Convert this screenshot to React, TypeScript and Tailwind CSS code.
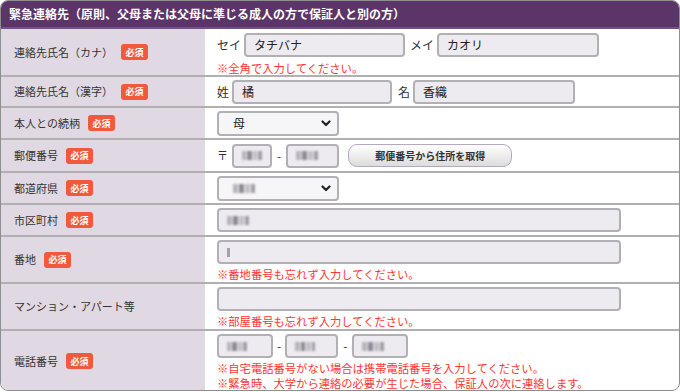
import React from "react";

const font = { fontFamily: '"Noto Sans CJK JP", "Noto Sans", sans-serif' };

function Badge() {
  return (
    <span className="ml-[8px] inline-flex h-[16px] w-[27px] items-center justify-center rounded-[3px] bg-[#f2583b] text-[9px] font-bold leading-none text-white">
      必須
    </span>
  );
}

function Label({ text, req = true }: { text: string; req?: boolean }) {
  return (
    <div className="flex w-[204px] shrink-0 items-center bg-[#e0d9e3] pl-[13px] text-[11px] text-[#333]">
      <span>{text}</span>
      {req && <Badge />}
    </div>
  );
}

function Blur({ w = 20 }: { w?: number }) {
  return (
    <span className="inline-flex items-center gap-[1px] blur-[0.8px]" style={{ width: w }}>
      <span className="h-[9px] w-[5px] bg-[#b9b4bc]" />
      <span className="h-[9px] w-[5px] bg-[#8f8a93]" />
      <span className="h-[9px] w-[5px] bg-[#c4bfc6]" />
      <span className="h-[9px] w-[4px] bg-[#a29da5]" />
    </span>
  );
}

function Input({ w, children }: { w: number | string; children?: React.ReactNode }) {
  return (
    <div
      className="flex h-[24px] items-center rounded-[4px] border-2 border-[#b3b0b5] bg-[#eeebf0] px-[8px] text-[12px] text-[#222]"
      style={{ width: w }}
    >
      {children}
    </div>
  );
}

function Select({ children }: { children?: React.ReactNode }) {
  return (
    <div className="flex h-[25px] w-[122px] items-center justify-between rounded-[4px] border-2 border-[#b3b0b5] bg-[#f6f5f7] pl-[14px] pr-[6px] text-[12px] text-[#222]">
      <span className="flex items-center">{children}</span>
      <svg width="10" height="7" viewBox="0 0 10 7">
        <path d="M1.5 1.5 L5 5 L8.5 1.5" fill="none" stroke="#222" strokeWidth="2.2" strokeLinecap="round" strokeLinejoin="round" />
      </svg>
    </div>
  );
}

function Note({ children }: { children: React.ReactNode }) {
  return <div className="text-[11.3px] leading-[15px] text-[#ff3434]">{children}</div>;
}

export default function App() {
  return (
    <div className="h-[392px] w-[680px] bg-white" style={font}>
      <div className="flex h-[391px] w-[680px] flex-col overflow-hidden rounded-[8px] border border-[#8e8e8e]">
        <div className="flex h-[28px] shrink-0 items-center border-b-2 border-[#74508a] bg-[#5b3468] pl-[8px] text-[12px] font-bold text-white">
          緊急連絡先（原則、父母または父母に準じる成人の方で保証人と別の方）
        </div>

        {/* row 1 */}
        <div className="flex h-[46px] shrink-0">
          <Label text="連絡先氏名（カナ）" />
          <div className="flex flex-col pl-[12px] pt-[4px]">
            <div className="flex items-center text-[12px] text-[#333]">
              <span className="mr-[3px]">セイ</span>
              <Input w={161}>タチバナ</Input>
              <span className="ml-[5px] mr-[3px]">メイ</span>
              <Input w={162}>カオリ</Input>
            </div>
            <div className="mt-[4px]">
              <Note>※全角で入力してください。</Note>
            </div>
          </div>
        </div>

        {/* row 2 */}
        <div className="flex h-[31px] shrink-0 border-t-2 border-[#b1afb2]">
          <Label text="連絡先氏名（漢字）" />
          <div className="flex items-center pl-[12px] text-[12px] text-[#333]">
            <span className="mr-[3px]">姓</span>
            <Input w={160}>橘</Input>
            <span className="ml-[6px] mr-[3px]">名</span>
            <Input w={162}>香織</Input>
          </div>
        </div>

        {/* row 3 */}
        <div className="flex h-[32px] shrink-0 border-t-2 border-[#b1afb2]">
          <Label text="本人との続柄" />
          <div className="flex items-center pl-[12px]">
            <Select>母</Select>
          </div>
        </div>

        {/* row 4 */}
        <div className="flex h-[33px] shrink-0 border-t-2 border-[#b1afb2]">
          <Label text="郵便番号" />
          <div className="flex items-center pl-[12px] text-[12px] text-[#333]">
            <span className="mr-[4px] text-[11px]">〒</span>
            <Input w={40}>
              <Blur />
            </Input>
            <span className="mx-[5px]">-</span>
            <Input w={53}>
              <Blur w={26} />
            </Input>
            <button className="ml-[9px] h-[23px] w-[164px] rounded-[9px] border border-[#b7a8c2] bg-gradient-to-b from-white to-[#dcdcdc] text-[10px] font-bold text-[#333]">
              郵便番号から住所を取得
            </button>
          </div>
        </div>

        {/* row 5 */}
        <div className="flex h-[32px] shrink-0 border-t-2 border-[#b1afb2]">
          <Label text="都道府県" />
          <div className="flex items-center pl-[12px]">
            <Select>
              <Blur w={28} />
            </Select>
          </div>
        </div>

        {/* row 6 */}
        <div className="flex h-[32px] shrink-0 border-t-2 border-[#b1afb2]">
          <Label text="市区町村" />
          <div className="flex items-center pl-[12px]">
            <Input w={404}>
              <Blur w={28} />
            </Input>
          </div>
        </div>

        {/* row 7 */}
        <div className="flex h-[47px] shrink-0 border-t-2 border-[#b1afb2]">
          <Label text="番地" />
          <div className="flex flex-col pl-[12px] pt-[3px]">
            <Input w={404}>
              <span className="h-[9px] w-[3px] bg-[#a6a1a8] blur-[0.5px]" />
            </Input>
            <div className="mt-[3px]">
              <Note>※番地番号も忘れず入力してください。</Note>
            </div>
          </div>
        </div>

        {/* row 8 */}
        <div className="flex h-[47px] shrink-0 border-t-2 border-[#b1afb2]">
          <Label text="マンション・アパート等" req={false} />
          <div className="flex flex-col pl-[12px] pt-[3px]">
            <Input w={404} />
            <div className="mt-[3px]">
              <Note>※部屋番号も忘れず入力してください。</Note>
            </div>
          </div>
        </div>

        {/* row 9 */}
        <div className="flex flex-1 border-t-2 border-[#b1afb2]">
          <Label text="電話番号" />
          <div className="flex flex-col pl-[12px] pt-[3px]">
            <div className="flex items-center text-[12px] text-[#333]">
              <Input w={56}>
                <Blur />
              </Input>
              <span className="mx-[4px]">-</span>
              <Input w={53}>
                <Blur />
              </Input>
              <span className="mx-[5px]">-</span>
              <Input w={56}>
                <Blur w={26} />
              </Input>
            </div>
            <div className="mt-[3px]">
              <Note>※自宅電話番号がない場合は携帯電話番号を入力してください。</Note>
              <Note>※緊急時、大学から連絡の必要が生じた場合、保証人の次に連絡します。</Note>
            </div>
          </div>
        </div>
      </div>
    </div>
  );
}
